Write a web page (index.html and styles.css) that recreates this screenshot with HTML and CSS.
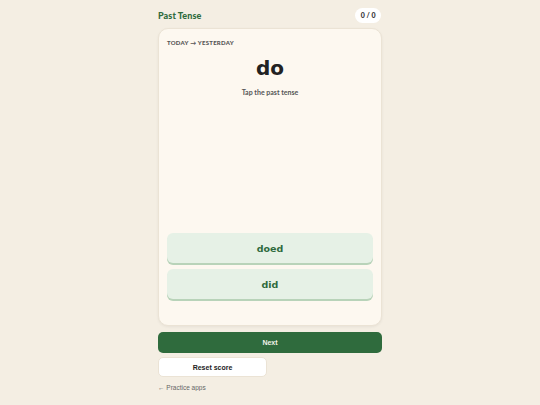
FILE: index.html
```html
<!DOCTYPE html>
<html>
<head>
<meta charset="utf-8">
<link rel="stylesheet" href="styles.css">
</head>
<body>
<div class="app">
  <header class="top">
    <h1 class="title">Past Tense</h1>
    <span class="score">0 / 0</span>
  </header>
  <section class="card">
    <div class="label">TODAY → YESTERDAY</div>
    <div class="word">do</div>
    <div class="hint">Tap the past tense</div>
    <div class="options">
      <button class="option">doed</button>
      <button class="option">did</button>
    </div>
  </section>
  <button class="next">Next</button>
  <button class="reset">Reset score</button>
  <a class="back" href="#">← Practice apps</a>
</div>
</body>
</html>
```
FILE: styles.css
```css
* { box-sizing: border-box; }
html, body { margin: 0; padding: 0; }
body {
  background: #f4eee3;
  font-family: "Liberation Sans", Arial, sans-serif;
  color: #2a2a2a;
}
.app {
  width: 224px;
  margin: 0 auto;
  padding-top: 7px;
  display: flex;
  flex-direction: column;
}
.top {
  display: flex;
  justify-content: space-between;
  align-items: center;
  height: 16px;
}
.title {
  margin: 0;
  font-family: "Lato", sans-serif;
  font-weight: 900;
  font-size: 9px;
  letter-spacing: 0.1px;
  color: #2f6b3d;
}
.score {
  background: #fff;
  border-radius: 8px;
  padding: 0 5.5px;
  height: 15px;
  line-height: 15px;
  font-family: "Lato", sans-serif;
  font-weight: 900;
  font-size: 7px;
  color: #333;
  margin-right: 1px;
}
.card {
  margin-top: 5px;
  height: 298px;
  background: #fdf8f0;
  border: 1px solid #ebe3d5;
  border-radius: 10px;
  box-shadow: 0 1px 3px rgba(0,0,0,0.06);
  padding: 9px 8px 26px 8px;
  display: flex;
  flex-direction: column;
}
.label {
  font-family: "Lato", sans-serif;
  font-weight: 900;
  font-size: 6px;
  letter-spacing: 0.25px;
  color: #555;
  margin-top: 1px;
}
.word {
  text-align: center;
  font-family: "DejaVu Sans", sans-serif;
  font-weight: 700;
  font-size: 20px;
  color: #222;
  line-height: 24px;
  margin-top: 10px;
}
.hint {
  text-align: center;
  font-family: "Lato", sans-serif;
  font-weight: 700;
  font-size: 7px;
  color: #555;
  margin-top: 8px;
}
.options {
  margin-top: auto;
  display: flex;
  flex-direction: column;
  gap: 6px;
}
.option {
  height: 30px;
  border: none;
  border-radius: 6px;
  background: #e6f1e6;
  box-shadow: 0 2px 0 #b8d3b9;
  font-family: "DejaVu Sans", sans-serif;
  font-weight: 700;
  font-size: 9.5px;
  color: #2f6b3d;
  padding: 0;
}
.next {
  margin-top: 6px;
  height: 21px;
  border: none;
  border-radius: 5px;
  background: #2f6b3d;
  color: #f2f2e8;
  font-family: "Liberation Sans", Arial, sans-serif;
  font-weight: 700;
  font-size: 7px;
  padding: 0;
}
.reset {
  margin-top: 4px;
  width: 109px;
  height: 20px;
  border: 1px solid #ebe3d5;
  border-radius: 5px;
  background: #fff;
  color: #222;
  font-family: "Liberation Sans", Arial, sans-serif;
  font-weight: 700;
  font-size: 7px;
  padding: 0;
}
.back {
  margin-top: 7px;
  font-size: 6.5px;
  color: #666;
  text-decoration: none;
}
```
